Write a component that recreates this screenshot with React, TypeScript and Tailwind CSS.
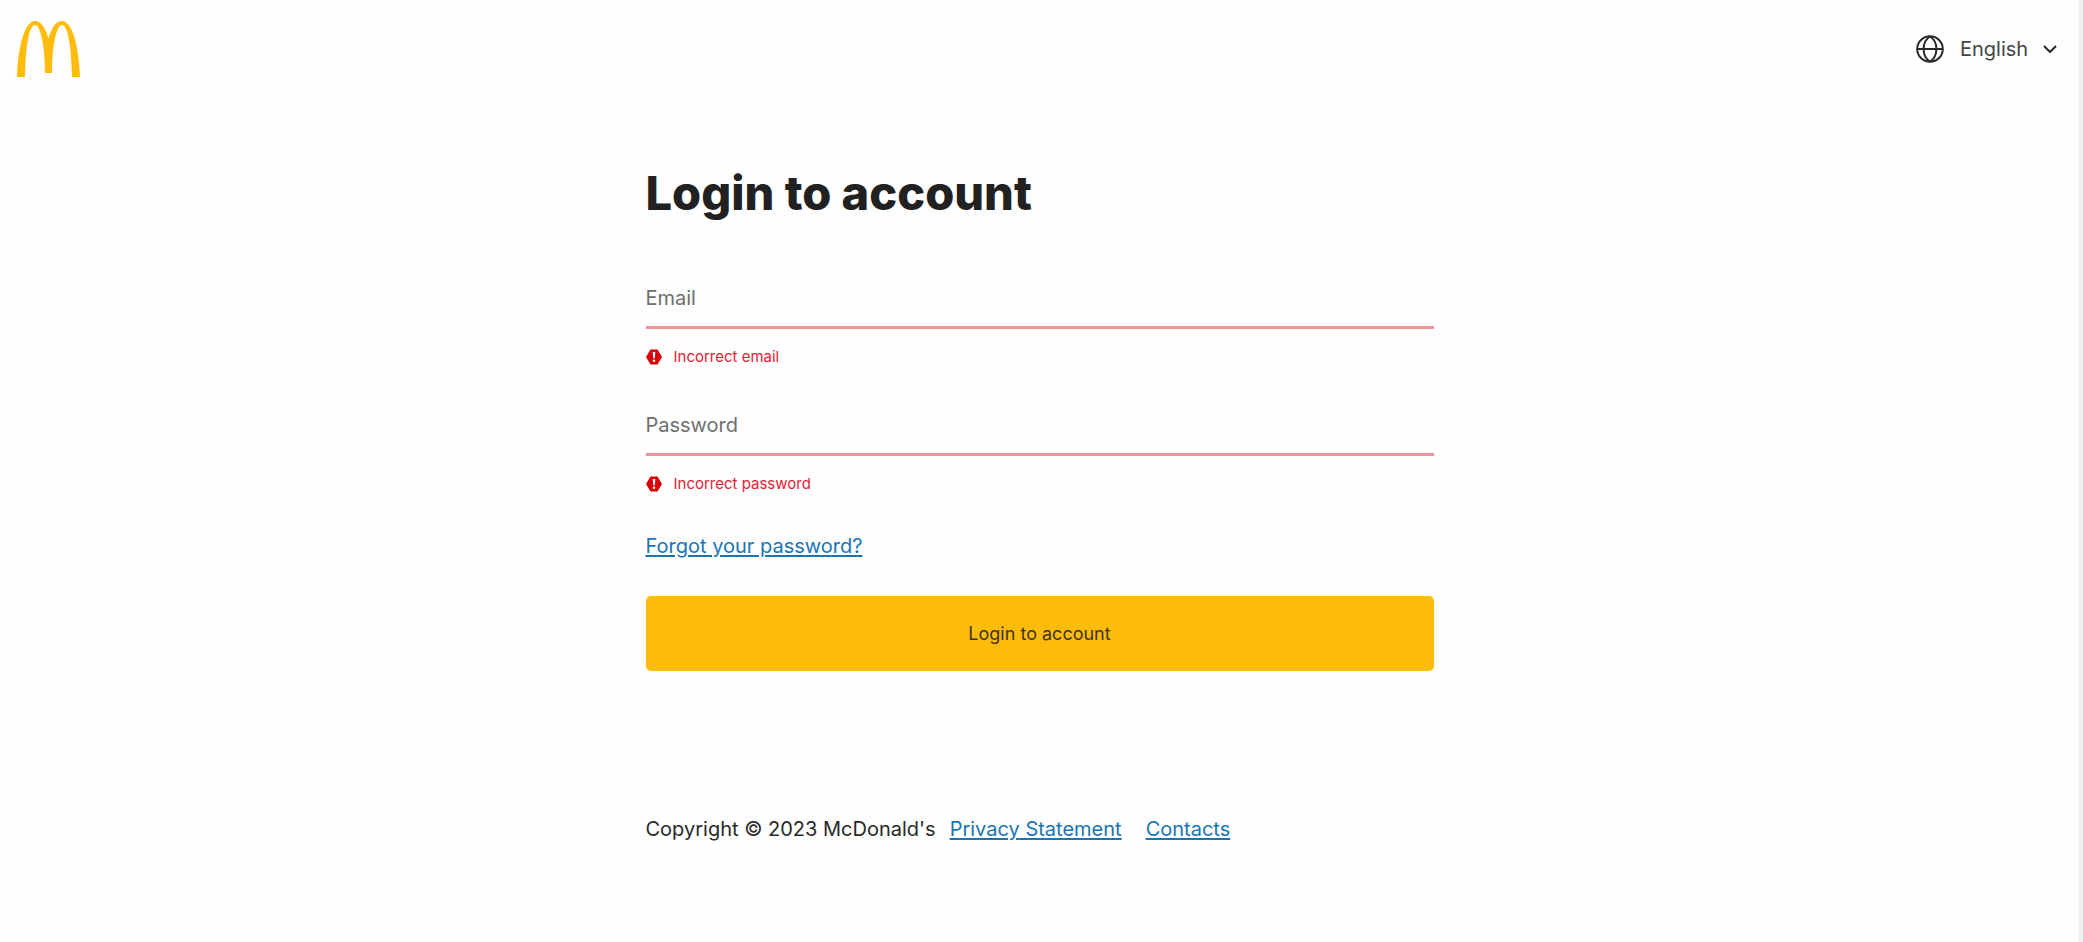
import React from "react";

function Logo() {
  return (
    <svg viewBox="0 0 63 56" className="h-14 w-[63px]" fill="#ffbc0d" role="img" aria-label="McDonald's">
      <path d="M0 56C1 24 8 0 18 0C24 0 28.500 7 31.500 17.500C34.500 7 39 0 45 0C55 0 62 24 63 56H55C54.500 27 51 4 45 4C39.500 4 35 25 35 52H28C28 25 23.500 4 18 4C12 4 8.500 27 8 56Z" />
    </svg>
  );
}

function Globe() {
  return (
    <svg viewBox="0 0 28 28" className="size-7" fill="none" stroke="#292929" strokeWidth="2" aria-hidden="true">
      <circle cx="14" cy="14" r="12.800" />
      <path d="M1 14H27M14 1.500C5.500 6.500 5.500 21.500 14 26.500M14 1.500C22.500 6.500 22.500 21.500 14 26.500" />
    </svg>
  );
}

function ErrorIcon() {
  return (
    <svg viewBox="0 0 16 16" className="size-4" aria-hidden="true">
      <path d="M4.500.5h7L16 8l-4.500 7.500h-7L0 8Z" fill="#db0007" />
      <path d="M6.700 3h2.600L8.800 9.300H7.200Z" fill="#fff" />
      <circle cx="8" cy="11.800" r="1.300" fill="#fff" />
    </svg>
  );
}

function Field({ id, type, label, error }: { id: string; type: string; label: string; error: string }) {
  return (
    <div className="flex h-[127px] flex-col">
      <div className="grid items-center">
        <input
          id={id}
          type={type}
          placeholder=" "
          aria-invalid="true"
          aria-describedby={`${id}-error`}
          className="peer col-start-1 row-start-1 h-[59px] w-full border-b-3 border-[#f19499] bg-transparent text-xl text-[#292929] outline-none"
        />
        <label
          htmlFor={id}
          className="pointer-events-none col-start-1 row-start-1 justify-self-start pb-1 text-xl text-[#6f6f6f] peer-not-placeholder-shown:self-start peer-not-placeholder-shown:text-xs"
        >
          {label}
        </label>
      </div>
      <p id={`${id}-error`} className="mt-4 flex items-center gap-3 text-[15px] leading-6 text-[#e21c34]">
        <ErrorIcon />
        {error}
      </p>
    </div>
  );
}

const link = "text-[#1a75b3] underline decoration-2 underline-offset-2";

export default function App() {
  return (
    <div className="min-h-screen border-r-4 border-[#f0f0f0] bg-[#fefefe] font-['Inter','Liberation_Sans',sans-serif] text-[#292929]">
      <header className="flex items-center justify-between pt-[21px] pr-[22px] pl-[17px]">
        <a href="#"><Logo /></a>
        <div className="flex items-center">
          <Globe />
          <div className="ml-4 grid items-center">
            <select id="language" aria-label="Language" className="col-start-1 row-start-1 appearance-none bg-transparent pr-7 text-xl text-[#444]">
              <option>English</option>
            </select>
            <svg viewBox="0 0 14 8" className="pointer-events-none col-start-1 row-start-1 h-2 w-3.5 justify-self-end" fill="none" stroke="#292929" strokeWidth="2" aria-hidden="true">
              <path d="M1 1L7 7L13 1" />
            </svg>
          </div>
        </div>
      </header>
      <main className="mx-auto max-w-[788px] pt-[88px]">
        <h1 className="text-[47px] leading-14 font-extrabold text-[#212121]">Login to account</h1>
        <form className="pt-[49px]">
          <Field id="email" type="email" label="Email" error="Incorrect email" />
          <Field id="password" type="password" label="Password" error="Incorrect password" />
          <a href="#" className={`mt-2 inline-block text-xl ${link}`}>Forgot your password?</a>
          <button type="button" className="mt-9 block h-[75px] w-full rounded-[5px] bg-[#ffbc0d] text-lg text-[#3d3420]">Login to account</button>
        </form>
        <footer className="flex flex-wrap pt-36 text-xl">
          <span className="mr-3.5">Copyright © 2023 McDonald's</span>
          <a href="#" className={`mr-6 ${link}`}>Privacy Statement</a>
          <a href="#" className={link}>Contacts</a>
        </footer>
      </main>
    </div>
  );
}
